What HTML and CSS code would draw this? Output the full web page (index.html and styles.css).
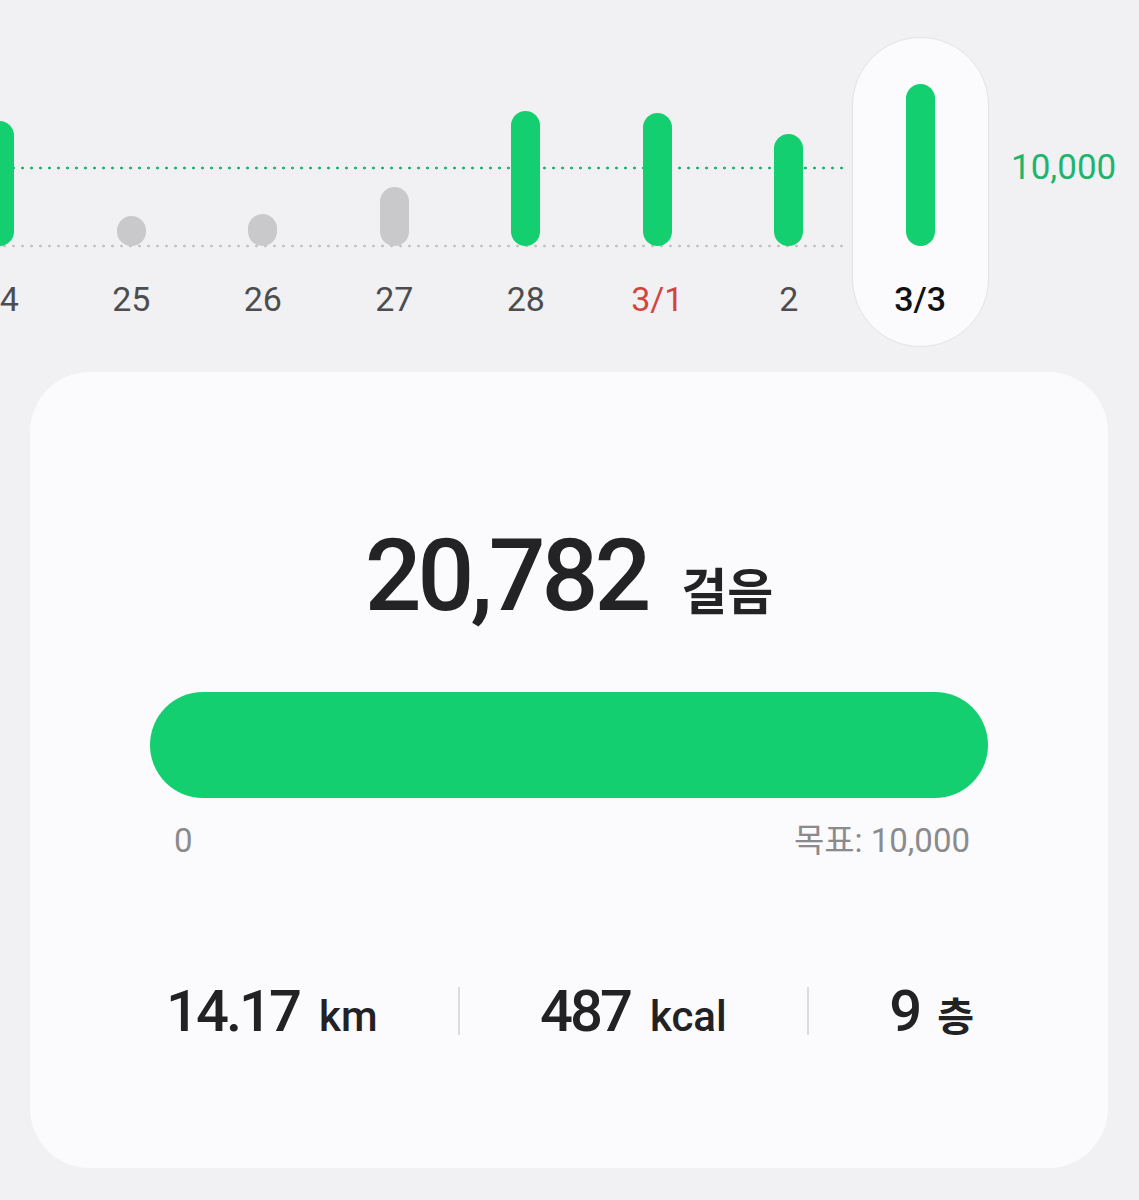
FILE: index.html
```html
<!DOCTYPE html>
<html lang="ko">
<head>
  <meta charset="UTF-8">
  <meta name="viewport" content="width=device-width, initial-scale=1.0">
  <title>걸음 수</title>
  <link rel="stylesheet" href="styles.css">
</head>
<body>
  <div class="chart">
    <div class="grid grid-goal"></div>
    <div class="grid grid-base"></div>

    <div class="day"><div class="plot"><span class="bar" style="height:125px"></span></div><span class="label">24</span></div>
    <div class="day"><div class="plot"><span class="bar low" style="height:30px"></span></div><span class="label">25</span></div>
    <div class="day"><div class="plot"><span class="bar low" style="height:32px"></span></div><span class="label">26</span></div>
    <div class="day"><div class="plot"><span class="bar low" style="height:59px"></span></div><span class="label">27</span></div>
    <div class="day"><div class="plot"><span class="bar" style="height:135px"></span></div><span class="label">28</span></div>
    <div class="day"><div class="plot"><span class="bar" style="height:133px"></span></div><span class="label holiday">3/1</span></div>
    <div class="day"><div class="plot"><span class="bar" style="height:112px"></span></div><span class="label">2</span></div>
    <div class="day today"><div class="plot"><span class="bar" style="height:162px"></span></div><span class="label">3/3</span></div>

    <span class="goal">10,000</span>
  </div>

  <main class="card">
    <div class="total">20,782<span class="unit">걸음</span></div>

    <div class="progress"></div>
    <div class="scale">
      <span>0</span>
      <span>목표: 10,000</span>
    </div>

    <div class="stats">
      <div class="stat">14.17<span class="unit">km</span></div>
      <div class="divider"></div>
      <div class="stat">487<span class="unit">kcal</span></div>
      <div class="divider"></div>
      <div class="stat">9<span class="unit ko">층</span></div>
    </div>
  </main>
</body>
</html>
```

FILE: styles.css
```css
body {
  margin: 0;
  background: #f1f1f3;
  font-family: Roboto, "Noto Sans CJK KR", sans-serif;
  overflow: hidden;
}

/* weekly chart */
.chart {
  position: relative;
  display: flex;
  align-items: flex-start;
  margin-left: -66px;
  padding-top: 37px;
}

.grid {
  position: absolute;
  left: 66px;
  width: 848px;
  height: 4px;
  background-repeat: repeat-x;
  background-size: 9px 4px;
}

.grid-goal {
  top: 166px;
  background-image: radial-gradient(circle, #22b874 1.2px, transparent 1.7px);
}

.grid-base {
  top: 244px;
  background-image: radial-gradient(circle, #c6c6c8 1.2px, transparent 1.7px);
}

.day {
  flex-shrink: 0;
  box-sizing: border-box;
  width: 131.5px;
  height: 310px;
  display: flex;
  flex-direction: column;
  align-items: center;
}

.plot {
  height: 209px;
  display: flex;
  align-items: flex-end;
}

.bar {
  position: relative;
  width: 29px;
  border-radius: 15px;
  background: #13cf6f;
}

.bar.low {
  background: #c9c9cb;
}

.label {
  margin-top: 33px;
  font-size: 34px;
  line-height: 40px;
  color: #4d4d4f;
}

.label.holiday {
  color: #d2453e;
}

.day.today {
  width: 137px;
  margin: 0 -2.75px;
  background: #fbfbfd;
  border: 1.5px solid #e3e3e5;
  border-radius: 70px;
}

.day.today .plot {
  height: 207.5px;
}

.day.today .label {
  color: #111;
  font-weight: 500;
}

.goal {
  flex-shrink: 0;
  margin-left: 25px;
  margin-top: 111px;
  font-size: 35px;
  line-height: 40px;
  color: #1db56d;
}

/* today card */
.card {
  margin: 25px 31px 0 30px;
  padding: 154px 120px 127px;
  background: #fbfbfd;
  border-radius: 60px;
}

.total {
  text-align: center;
  font-size: 100px;
  line-height: 100px;
  font-weight: 500;
  letter-spacing: -4px;
  color: #232325;
}

.total .unit {
  margin-left: 34px;
  font-size: 50px;
  line-height: 1;
  font-weight: 700;
  letter-spacing: 0;
}

.progress {
  margin-top: 66px;
  height: 106px;
  border-radius: 53px;
  background: #13cf6f;
}

.scale {
  display: flex;
  justify-content: space-between;
  margin-top: 23px;
  padding: 0 18px 0 24px;
  font-size: 33px;
  line-height: 40px;
  color: #8b8b8d;
}

.stats {
  display: flex;
  justify-content: space-between;
  align-items: center;
  margin-top: 120px;
  padding: 0 14px 0 16px;
  color: #222224;
}

.stat {
  white-space: nowrap;
  font-size: 58px;
  line-height: 60px;
  font-weight: 500;
  letter-spacing: -3px;
}

.stat .unit {
  margin-left: 20px;
  font-size: 42px;
  line-height: 1;
  letter-spacing: 0;
}

.stat .unit.ko {
  margin-left: 18px;
  font-size: 40px;
  font-weight: 700;
}

.divider {
  width: 1.5px;
  height: 48px;
  background: #dcdcde;
}
```
